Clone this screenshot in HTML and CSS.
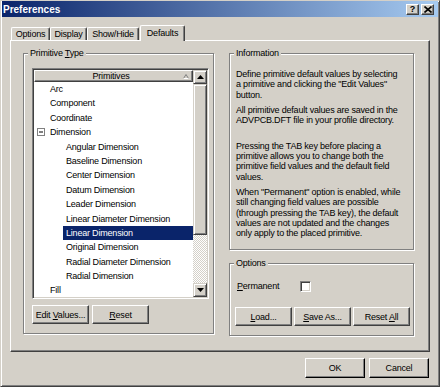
FILE: index.html
```html
<!DOCTYPE html>
<html lang="en">
<head>
    <meta charset="UTF-8">
    <title>Preferences</title>
    <link rel="stylesheet" href="styles.css">
</head>
<body>
    <div class="window">
        <div class="titlebar">
            <span class="title">Preferences</span>
            <div class="title-buttons">
                <span class="tbtn">?</span>
                <span class="tbtn">
                    <svg width="8" height="7" viewBox="0 0 8 7"><path d="M0.5 0.5 L7.5 6.5 M7.5 0.5 L0.5 6.5" stroke="#000" stroke-width="1.6"/></svg>
                </span>
            </div>
        </div>

        <div class="tabs">
            <span class="tab tab-options">Options</span>
            <span class="tab tab-display">Display</span>
            <span class="tab tab-showhide">Show/Hide</span>
            <span class="tab tab-defaults active">Defaults</span>
        </div>

        <div class="panel">
            <fieldset class="group primitive-group">
                <legend>Primitive <u>T</u>ype</legend>
                <div class="listview">
                    <div class="list-main">
                        <div class="list-header">
                            <span class="header-text">Primitives</span>
                            <svg class="sort" width="6" height="5" viewBox="0 0 6 5"><path d="M0.5 4.5 L3 0.5 L5.5 4.5" fill="none" stroke="#808080"/><path d="M0.5 4.5 H5.5" stroke="#fff"/></svg>
                        </div>
                        <div class="list-body">
                            <div class="row">Arc</div>
                            <div class="row">Component</div>
                            <div class="row">Coordinate</div>
                            <div class="row parent">
                                <svg class="minus" width="8" height="8" viewBox="0 0 8 8"><rect x="0.5" y="0.5" width="7" height="7" fill="#fff" stroke="#808080"/><path d="M2 4 H6" stroke="#000"/></svg>
                                Dimension
                            </div>
                            <div class="row child">Angular Dimension</div>
                            <div class="row child">Baseline Dimension</div>
                            <div class="row child">Center Dimension</div>
                            <div class="row child">Datum Dimension</div>
                            <div class="row child">Leader Dimension</div>
                            <div class="row child">Linear Diameter Dimension</div>
                            <div class="row child selected">Linear Dimension</div>
                            <div class="row child">Original Dimension</div>
                            <div class="row child">Radial Diameter Dimension</div>
                            <div class="row child">Radial Dimension</div>
                            <div class="row">Fill</div>
                        </div>
                    </div>
                    <div class="scrollbar">
                        <span class="sb-btn">
                            <svg width="7" height="4" viewBox="0 0 7 4"><path d="M3.5 0 L7 4 H0 Z"/></svg>
                        </span>
                        <div class="sb-track">
                            <div class="sb-thumb"></div>
                        </div>
                        <span class="sb-btn">
                            <svg width="7" height="4" viewBox="0 0 7 4"><path d="M0 0 H7 L3.5 4 Z"/></svg>
                        </span>
                    </div>
                </div>
                <div class="btn-row list-buttons">
                    <button class="btn">Edit <u>V</u>alues...</button>
                    <button class="btn"><u>R</u>eset</button>
                </div>
            </fieldset>

            <div class="right-col">
                <fieldset class="group info-group">
                    <legend>Information</legend>
                    <div class="info">
                        <p>Define primitive default values by selecting<br>a primitive and clicking the "Edit Values"<br>button.</p>
                        <p>All primitive default values are saved in the<br>ADVPCB.DFT file in your profile directory.<br>&nbsp;</p>
                        <p>Pressing the TAB key before placing a<br>primitive allows you to change both the<br>primitive field values and the default field<br>values.</p>
                        <p>When "Permanent" option is enabled, while<br>still changing field values are possible<br>(through pressing the TAB key), the default<br>values are not updated and the changes<br>only apply to the placed primitive.</p>
                    </div>
                </fieldset>

                <fieldset class="group options-group">
                    <legend>Options</legend>
                    <div class="perm-row">
                        <span class="perm-label"><u>P</u>ermanent</span>
                        <span class="checkbox"></span>
                    </div>
                    <div class="btn-row option-buttons">
                        <button class="btn"><u>L</u>oad...</button>
                        <button class="btn"><u>S</u>ave As...</button>
                        <button class="btn">Reset <u>A</u>ll</button>
                    </div>
                </fieldset>
            </div>
        </div>

        <div class="dialog-buttons">
            <button class="btn wide">OK</button>
            <button class="btn wide">Cancel</button>
        </div>
    </div>
</body>
</html>
```

FILE: styles.css
```css
body {
    margin: 0;
    font-family: "Liberation Sans", Arial, sans-serif;
    font-size: 9px;
    letter-spacing: -0.2px;
    color: #000;
    background: #d4d0c8;
}

.window {
    width: 440px;
    height: 387px;
    box-sizing: border-box;
    padding: 0 1px;
    border: 1px solid;
    border-color: #d4d0c8 #404040 #404040 #d4d0c8;
    box-shadow: inset 1px 1px 0 #fff, inset -1px -1px 0 #808080;
    background: #d4d0c8;
    overflow: hidden;
}

/* title bar */
.titlebar {
    height: 16px;
    display: flex;
    align-items: center;
    padding: 0 4px 0 1px;
    background: linear-gradient(to right, #0a246a, #a6caf0);
}
.title {
    flex: 1;
    color: #fff;
    font-weight: bold;
    font-size: 10px;
    letter-spacing: 0;
}
.title-buttons {
    display: flex;
    gap: 2px;
}
.tbtn {
    width: 13px;
    height: 11px;
    box-sizing: border-box;
    border: 1px solid;
    border-color: #fff #404040 #404040 #fff;
    box-shadow: inset -1px -1px 0 #808080;
    background: #d4d0c8;
    display: flex;
    align-items: center;
    justify-content: center;
    font-weight: bold;
    font-size: 9px;
    letter-spacing: 0;
}

/* tabs */
.tabs {
    display: flex;
    align-items: flex-end;
    height: 15px;
    margin: 8px 0 0 9px;
}
.tab {
    height: 13px;
    box-sizing: border-box;
    border: 1px solid;
    border-bottom: 0;
    border-color: #fff #404040 #fff #fff;
    box-shadow: inset -1px 0 0 #808080;
    border-radius: 2px 2px 0 0;
    background: #d4d0c8;
    display: flex;
    align-items: center;
    justify-content: center;
}
.tab-options { width: 39px; }
.tab-display { width: 37px; }
.tab-showhide { width: 52px; }
.tab-defaults { width: 45px; margin-left: 1px; }
.tab.active {
    height: 16px;
    margin-bottom: -1px;
    padding-bottom: 2px;
    position: relative;
    z-index: 1;
}

/* tab page */
.panel {
    margin-left: 8px;
    width: 420px;
    height: 312px;
    box-sizing: border-box;
    border: 1px solid;
    border-color: #fff #404040 #404040 #fff;
    box-shadow: inset -1px -1px 0 #808080;
    padding: 6px 0 0 12px;
    display: flex;
    gap: 15px;
    align-items: flex-start;
}

.group {
    margin: 0;
    min-width: 0;
    box-sizing: border-box;
    border: 1px solid #808080;
    box-shadow: inset 1px 1px 0 #fff, 1px 1px 0 #fff;
    padding: 0 0 0 4px;
}
.group legend {
    padding: 0 2px;
    line-height: 12px;
    background: #d4d0c8;
}

.primitive-group {
    width: 191px;
    height: 287px;
    padding-top: 9px;
}

/* list view */
.listview {
    margin-left: 4px;
    width: 177px;
    height: 231px;
    box-sizing: border-box;
    border: 1px solid;
    border-color: #808080 #fff #fff #808080;
    box-shadow: inset 1px 1px 0 #404040, inset -1px -1px 0 #d4d0c8;
    padding: 1px;
    display: flex;
}
.list-main {
    flex: 1;
    display: flex;
    flex-direction: column;
    background: #fff;
    overflow: hidden;
}
.list-header {
    height: 12px;
    flex: none;
    box-sizing: border-box;
    border: 1px solid;
    border-color: #fff #404040 #404040 #fff;
    box-shadow: inset -1px -1px 0 #808080;
    background: #d4d0c8;
    display: flex;
    align-items: center;
    padding-right: 3px;
}
.header-text {
    flex: 1;
    text-align: center;
    padding-left: 4px;
}
.list-body {
    flex: 1;
    overflow: hidden;
}
.row {
    height: 14.4px;
    line-height: 14.4px;
    white-space: nowrap;
    padding-left: 16px;
}
.row.parent {
    display: flex;
    align-items: center;
    padding-left: 3px;
}
.minus {
    margin-right: 5px;
}
.row.child {
    padding-left: 32px;
}
.row.selected {
    margin-left: 29px;
    padding-left: 3px;
    background: #0a246a;
    color: #fff;
}

.scrollbar {
    width: 14px;
    display: flex;
    flex-direction: column;
}
.sb-btn,
.sb-thumb {
    box-sizing: border-box;
    border: 1px solid;
    border-color: #d4d0c8 #404040 #404040 #d4d0c8;
    box-shadow: inset 1px 1px 0 #fff, inset -1px -1px 0 #808080;
    background: #d4d0c8;
}
.sb-btn {
    height: 14px;
    display: flex;
    align-items: center;
    justify-content: center;
}
.sb-track {
    flex: 1;
    background: repeating-conic-gradient(#d4d0c8 0 25%, #fff 0 50%) 0 0 / 2px 2px;
}
.sb-thumb {
    height: 151px;
}

/* buttons */
.btn {
    height: 19px;
    width: 57px;
    padding: 0;
    font: inherit;
    letter-spacing: inherit;
    color: #000;
    background: #d4d0c8;
    border: 1px solid;
    border-color: #fff #404040 #404040 #fff;
    box-shadow: inset -1px -1px 0 #808080;
}
.btn-row {
    display: flex;
}
.list-buttons {
    margin: 6px 0 0 4px;
    gap: 3px;
}

/* right column */
.right-col {
    width: 185px;
    display: flex;
    flex-direction: column;
}
.info-group {
    height: 203px;
    padding-top: 10px;
}
.info {
    margin-left: 2px;
    line-height: 10.3px;
    white-space: nowrap;
}
.info p {
    margin: 0;
}
.info p + p {
    margin-top: 5px;
}

.options-group {
    margin-top: 7px;
    height: 79px;
    padding-top: 11px;
}
.perm-row {
    height: 12px;
    display: flex;
    align-items: center;
    padding-left: 3px;
}
.perm-label {
    width: 63px;
}
.checkbox {
    width: 11px;
    height: 11px;
    box-sizing: border-box;
    border: 1px solid;
    border-color: #808080 #fff #fff #808080;
    box-shadow: inset 1px 1px 0 #404040, inset -1px -1px 0 #d4d0c8;
    background: #fff;
}
.option-buttons {
    margin: 15px 0 0 1px;
    gap: 2px;
}

.dialog-buttons {
    display: flex;
    justify-content: flex-end;
    gap: 4px;
    margin-top: 6px;
    padding-right: 9px;
}
.btn.wide {
    width: 60px;
    height: 20px;
    border-color: #fff #000 #000 #fff;
}
```
